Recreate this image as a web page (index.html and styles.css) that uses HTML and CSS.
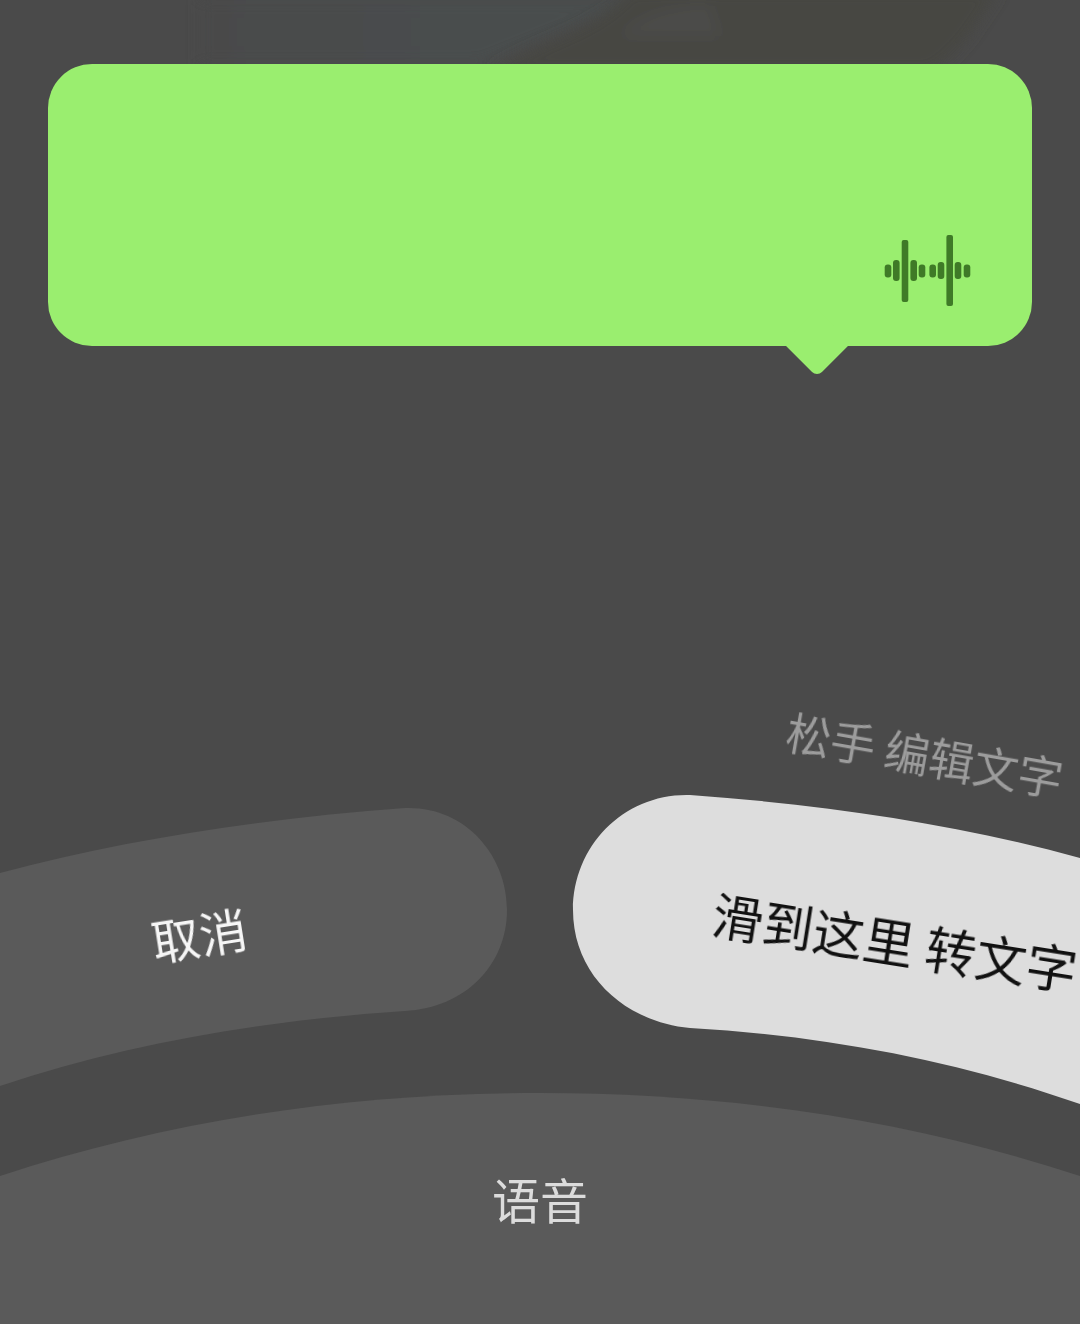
FILE: index.html
```html
<!DOCTYPE html>
<html lang="zh-CN">
<head>
<meta charset="utf-8">
<title>语音</title>
<link rel="stylesheet" href="styles.css">
</head>
<body>
<main class="screen">
  <svg class="backdrop" viewBox="0 0 1080 64" aria-hidden="true">
    <defs>
      <filter id="soft" x="-20%" y="-50%" width="140%" height="200%"><feGaussianBlur stdDeviation="7"/></filter>
      <linearGradient id="cool" x1="0" x2="1" y1="0" y2="0">
        <stop offset="0" stop-color="#4a4a4a"/>
        <stop offset="0.6" stop-color="#4a4d4e"/>
        <stop offset="1" stop-color="#4a4d4d"/>
      </linearGradient>
    </defs>
    <path d="M200 0H640L480 64H200Z" fill="url(#cool)" filter="url(#soft)"/>
    <g filter="url(#soft)">
      <path class="back-dark" d="M490 72C540 40 600 30 630 -10H1000C975 25 965 50 930 72Z"/>
      <path class="back-mid" d="M620 36C640 12 690 2 710 6L720 36Z"/>
    </g>
  </svg>
  <svg class="arcs" viewBox="0 0 1080 1324" aria-hidden="true">
    <path class="arc-grey" d="M0 873C130 838 270 818 405 808C465 806 507 855 507 910C507 965 465 1008 405 1011C270 1020 130 1042 0 1086Z"/>
    <path class="arc-light" d="M690 795C830 805 960 825 1080 858V1104C960 1062 830 1036 690 1028C625 1022 573 975 573 910C573 845 625 793 690 795Z"/>
    <path class="arc-grey" d="M0 1176C170 1120 350 1093 540 1093C730 1093 910 1120 1080 1176V1324H0Z"/>
  </svg>
  <section class="bubble">
    <svg class="wave" viewBox="0 0 90 74" aria-hidden="true">
      <rect x="0.7" y="29.5" width="6.6" height="13" rx="3"/>
      <rect x="9" y="25" width="6.6" height="21" rx="3"/>
      <rect x="17.7" y="5" width="6.6" height="62" rx="2"/>
      <rect x="26.4" y="25" width="6.6" height="21" rx="3"/>
      <rect x="34.7" y="29.5" width="6.6" height="13" rx="3"/>
      <rect x="45.4" y="29.5" width="6.6" height="13" rx="3"/>
      <rect x="53.7" y="27" width="6.6" height="17" rx="3"/>
      <rect x="62.4" y="0" width="6.6" height="71" rx="2"/>
      <rect x="70.7" y="27" width="6.6" height="17" rx="3"/>
      <rect x="79.7" y="29.5" width="6.6" height="13" rx="3"/>
    </svg>
    <span class="tail"></span>
  </section>
  <span class="label hint">松手 编辑文字</span>
  <span class="label cancel">取消</span>
  <span class="label convert">滑到这里 转文字</span>
  <span class="label voice">语音</span>
</main>
</body>
</html>
```
FILE: styles.css
```css
html, body { margin: 0; padding: 0; background: #4a4a4a; }
.screen {
  position: relative;
  width: 1080px;
  height: 1324px;
  overflow: hidden;
  background: #4a4a4a;
  font-family: "Noto Sans CJK SC", "Noto Sans", sans-serif;
  padding-top: 64px;
  padding-left: 48px;
  box-sizing: border-box;
}
.backdrop { position: absolute; left: 0; top: 0; width: 1080px; height: 64px; }
.back-dark { fill: #474743; }
.back-mid { fill: #4c4c48; }
.arcs { position: absolute; left: 0; top: 0; width: 1080px; height: 1324px; }
.arc-grey { fill: #5a5a5a; }
.arc-light { fill: #dddddd; }
.bubble {
  position: relative;
  width: 984px;
  height: 282px;
  background: #9aee6f;
  border-radius: 44px;
}
.wave {
  position: absolute;
  left: 836px;
  top: 171px;
  width: 90px;
  height: 74px;
  fill: #3f7a27;
}
.tail {
  position: absolute;
  left: 745px;
  top: 255px;
  width: 48px;
  height: 48px;
  background: #9aee6f;
  transform: rotate(45deg);
  border-bottom-right-radius: 7px;
}
.label {
  position: absolute;
  line-height: 1;
  white-space: nowrap;
  will-change: transform;
  transform: translate(-50%, -50%) rotate(var(--tilt));
}
.hint { left: 925px; top: 754px; font-size: 45px; color: #9c9c9c; --tilt: 10deg; }
.cancel { left: 199px; top: 933px; font-size: 48px; color: #f6f6f6; --tilt: -9deg; }
.convert { left: 895px; top: 941px; font-size: 51px; color: #111111; --tilt: 9deg; }
.voice { left: 540px; top: 1198px; font-size: 48px; color: #dcdcdc; --tilt: 0deg; }
```
